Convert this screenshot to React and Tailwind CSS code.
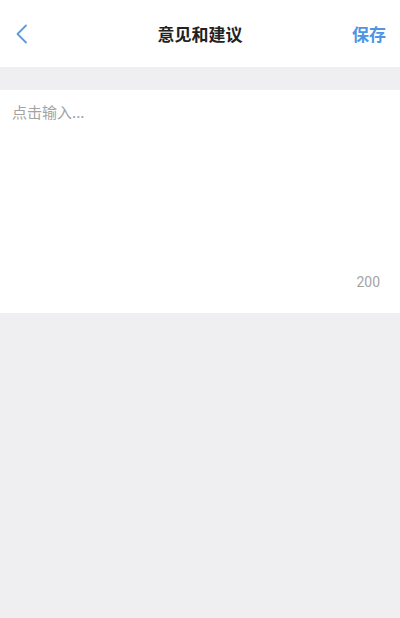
import { useState } from 'react';

export default function App() {
  const [text, setText] = useState('');

  return (
    <div
      className="flex flex-col w-full h-[618px] bg-[#efeef1]"
      style={{ fontFamily: '"Noto Sans CJK SC", "Noto Sans", sans-serif' }}
    >
      <header className="flex items-center justify-between h-[67px] px-3 bg-white">
        <button className="w-8 h-8 flex items-center text-[#5b9bdc]">
          <svg width="18" height="22" viewBox="0 0 18 22" fill="none">
            <path d="M14 2.5 L5.5 11 L14 19.5" stroke="currentColor" strokeWidth="1.8" strokeLinecap="round" strokeLinejoin="round" />
          </svg>
        </button>
        <h1 className="text-[17px] font-bold text-[#222] pl-[4px]">意见和建议</h1>
        <button className="text-[17px] font-bold text-[#4d95e6] pr-[2px]">保存</button>
      </header>

      <div className="mt-[23px] h-[223px] bg-white flex flex-col px-3 pt-[11px] pb-[20px]">
        <textarea
          value={text}
          onChange={(e) => setText(e.target.value)}
          maxLength={200}
          placeholder="点击输入..."
          className="flex-1 resize-none outline-none text-[15px] text-[#333] placeholder:text-[#a3a3a3] bg-transparent"
        />
        <div
          className="text-right text-[14px] text-[#a3a3a3] pr-[8px]"
          style={{ fontFamily: 'Roboto, "Noto Sans", sans-serif' }}
        >
          {200 - text.length}
        </div>
      </div>
    </div>
  );
}
